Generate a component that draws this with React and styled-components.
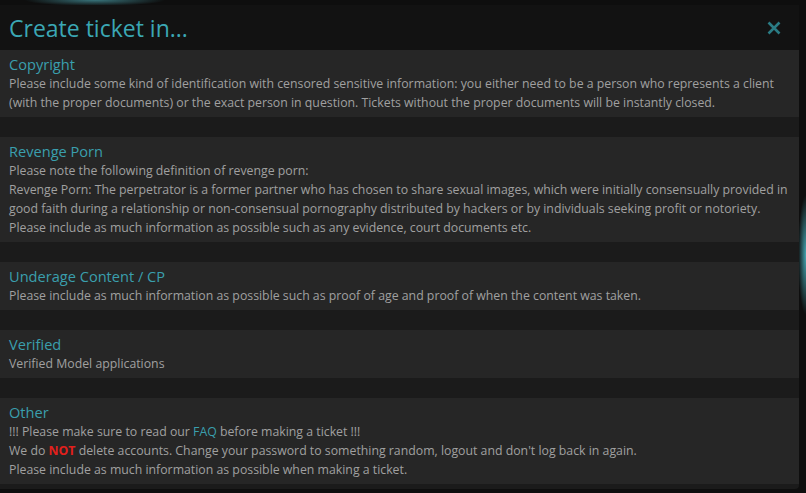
import React from 'react';
import styled, { createGlobalStyle } from 'styled-components';

const GlobalStyle = createGlobalStyle`
    html, body {
        margin:0;
        padding:0;
        width:806px;
        height:493px;
        overflow:hidden;
    }
    body {
        background:
            radial-gradient(ellipse 70px 6px at 95px 0px, rgba(70, 150, 160, 0.75), transparent),
            radial-gradient(ellipse 8px 60px at 806px 255px, rgba(80, 190, 205, 0.85), transparent),
            #0e0e0e;
        font-family:"Open Sans", "Noto Sans", sans-serif;
    }
`;

const Page = styled.div`
    display:flex;
    padding:5px 7px 0 0;
`;

const Modal = styled.div`
    display:flex;
    flex-direction:column;
    width:799px;
    height:484px;
    background:#1b1b1b;
    border-radius:0 0 4px 0;
    overflow:hidden;
`;

const Header = styled.div`
    display:flex;
    align-items:center;
    justify-content:space-between;
    height:45px;
    padding:0 18px 0 9px;
    background:#121212;
`;

const Title = styled.h1`
    margin:0;
    font-size:23px;
    font-weight:400;
    color:#3ba7b4;
`;

const Close = styled.button`
    display:flex;
    border:none;
    background:none;
    padding:0;
    cursor:pointer;
`;

const List = styled.div`
    display:flex;
    flex-direction:column;
    gap:20px;
`;

const Section = styled.div`
    padding:4px 10px 5px 9px;
    background:#262626;
`;

const SectionTitle = styled.div`
    font-size:14.6px;
    line-height:20px;
    color:#3a9fad;
`;

const Line = styled.div`
    font-size:12.3px;
    line-height:19px;
    color:#a0a0a0;
    white-space:nowrap;
`;

const Link = styled.a`
    color:#3a9fad;
    text-decoration:none;
`;

const Strong = styled.b`
    color:#e3201c;
    font-weight:700;
`;

const sections = [
    {
        title: 'Copyright',
        lines: [
            'Please include some kind of identification with censored sensitive information: you either need to be a person who represents a client',
            '(with the proper documents) or the exact person in question. Tickets without the proper documents will be instantly closed.',
        ],
    },
    {
        title: 'Revenge Porn',
        lines: [
            'Please note the following definition of revenge porn:',
            'Revenge Porn: The perpetrator is a former partner who has chosen to share sexual images, which were initially consensually provided in',
            'good faith during a relationship or non-consensual pornography distributed by hackers or by individuals seeking profit or notoriety.',
            'Please include as much information as possible such as any evidence, court documents etc.',
        ],
    },
    {
        title: 'Underage Content / CP',
        lines: [
            'Please include as much information as possible such as proof of age and proof of when the content was taken.',
        ],
    },
    {
        title: 'Verified',
        lines: ['Verified Model applications'],
    },
    {
        title: 'Other',
        lines: [
            <>!!! Please make sure to read our <Link href="#">FAQ</Link> before making a ticket !!!</>,
            <>We do <Strong>NOT</Strong> delete accounts. Change your password to something random, logout and don't log back in again.</>,
            'Please include as much information as possible when making a ticket.',
        ],
    },
];

export default function App() {
    return (
        <>
            <GlobalStyle />
            <Page>
                <Modal>
                    <Header>
                        <Title>Create ticket in...</Title>
                        <Close aria-label="close">
                            <svg width="14" height="14" viewBox="0 0 14 14">
                                <path d="M1.5 1.5 L12.5 12.5 M12.5 1.5 L1.5 12.5" stroke="#2a7b84" strokeWidth="2.6" strokeLinecap="butt" />
                            </svg>
                        </Close>
                    </Header>
                    <List>
                        {sections.map((s) => (
                            <Section key={s.title}>
                                <SectionTitle>{s.title}</SectionTitle>
                                {s.lines.map((l, i) => (
                                    <Line key={i}>{l}</Line>
                                ))}
                            </Section>
                        ))}
                    </List>
                </Modal>
            </Page>
        </>
    );
}
